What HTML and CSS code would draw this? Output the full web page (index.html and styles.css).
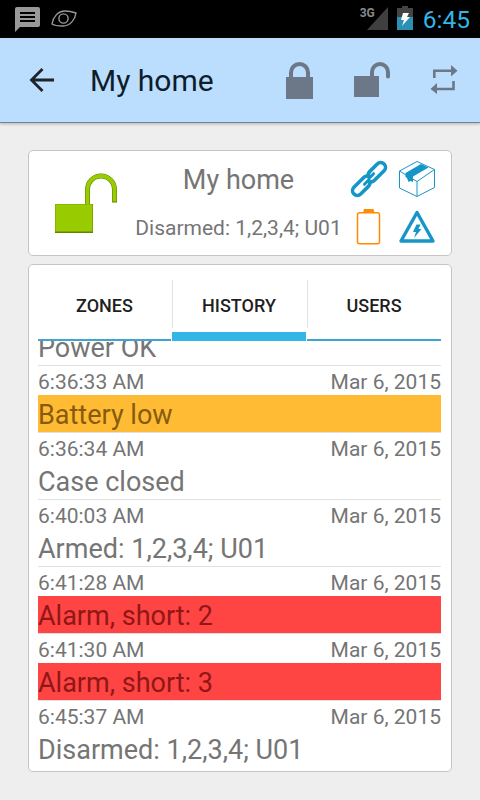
FILE: index.html
```html
<!DOCTYPE html>
<html>
    <head>
        <meta charset="utf-8">
        <title>My home</title>
        <link rel="stylesheet" href="styles.css">
    </head>
    <body>
        <div class="statusbar">
            <svg class="sms" width="26" height="26" viewBox="0 0 26 26">
                <path fill="#999" d="M2 0h21q2 0 2 2v16q0 2-2 2H5l-5 5V2q0-2 2-2z"/>
                <path stroke="#000" stroke-width="2" d="M5 6h15M5 10h15M5 14h15"/>
            </svg>
            <svg class="eye" width="26" height="18" viewBox="0 0 26 18" fill="none" stroke="#999" stroke-width="1.4">
                <path d="M1 14C2 7 7 1 14 1c5 0 8 1 11 2-1 7-6 13-13 13-5 0-8 0-11-2z"/>
                <circle cx="12.500" cy="8.500" r="4.600"/>
            </svg>
            <span class="network">3G</span>
            <svg class="signal" width="21" height="23" viewBox="0 0 21 23">
                <path fill="#3f3f3f" d="M21 0v23H0z"/>
            </svg>
            <svg class="charge" width="16" height="24" viewBox="0 0 16 24">
                <path fill="#444" d="M5 0h6v2h5v22H0V2h5z"/>
                <path fill="#2b91b3" d="M0 11h16v13H0z"/>
                <path fill="#fff" d="M6 7h6l-2 4h3l-8 9 2-6H4z"/>
            </svg>
            <span class="clock">6:45</span>
        </div>

        <div class="actionbar">
            <svg class="back" width="26" height="26" viewBox="0 0 26 26" fill="none" stroke="#1c2329" stroke-width="2.8">
                <path d="M25 13H3M13.500 2L2.500 13l11 11"/>
            </svg>
            <h1>My home</h1>
            <svg class="lock" width="28" height="37" viewBox="0 0 28 37">
                <path fill="#6c7787" d="M0 15h27v22H0z"/>
                <path fill="none" stroke="#6c7787" stroke-width="4" d="M5 16v-5.500a8.500 8.500 0 0 1 17 0V16"/>
            </svg>
            <svg class="unlock" width="37" height="36" viewBox="0 0 37 36">
                <path fill="#6c7787" d="M0 14h25v21H0z"/>
                <path fill="none" stroke="#6c7787" stroke-width="4" stroke-linecap="round" d="M18 15v-5a8 8 0 0 1 16 0v4.500"/>
            </svg>
            <svg class="refresh" width="28" height="30" viewBox="0 0 28 30">
                <path fill="none" stroke="#6c7787" stroke-width="2.6" d="M4.300 13V5.700H22M23.500 16v8H6"/>
                <path fill="#6c7787" d="M21 0l6.500 5.700L21 11.500zM7 18l-6.500 6L7 29z"/>
            </svg>
        </div>

        <div class="card summary">
            <svg class="state" width="64" height="62" viewBox="0 0 64 62">
                <path fill="none" stroke="#5f8500" stroke-width="5" d="M32.500 32V16.500a13.500 13.500 0 0 1 27 0v13"/>
                <path fill="none" stroke="#9c0" stroke-width="3.800" d="M32.500 32V16.500a13.500 13.500 0 0 1 27 0v12"/>
                <path fill="#5f8500" d="M0 31h38v29H0z"/>
                <path fill="#9c0" d="M.3 31.300h37.200v27.200H.3z"/>
            </svg>
            <div class="info">
                <div class="name">My home</div>
                <div class="status">Disarmed: 1,2,3,4; U01</div>
            </div>
            <div class="indicators">
                <svg width="38" height="38" viewBox="0 0 38 38" fill="none" stroke="#1696c8" stroke-width="3.600" stroke-linecap="round">
                    <g transform="rotate(-45 19 19)">
                        <path d="M21 17.500c-1-2.500-3-3.300-5-3.300H2.500a4.800 4.800 0 0 0 0 9.600H13c2.500 0 4-1 5-3"/>
                        <path d="M17 20.500c1 2.500 3 3.300 5 3.300h13.500a4.800 4.800 0 0 0 0-9.600H25c-2.500 0-4 1-5 3"/>
                        <path d="M12 19.500h6M20 18.500h6" stroke-width="3"/>
                    </g>
                </svg>
                <svg width="38" height="38" viewBox="0 0 38 38" fill="none" stroke="#1696c8">
                    <path d="M19 1.500l17.500 8v18L19 36.500 1.500 28V11zM1.500 11L19 21.500l17.500-12M19 21.500v15"/>
                    <path fill="#1696c8" stroke="none" d="M7.500 13L23 4l7.500 3.500-15.500 9v5.500l-2.500-1-2 1-1.500-4-1.500-1z"/>
                </svg>
                <svg width="38" height="38" viewBox="0 0 38 38">
                    <rect x="7.500" y="4.800" width="22" height="31" rx="2" fill="none" stroke="#ff8a05" stroke-width="1.500"/>
                    <path fill="#ff8a05" d="M14 1h9.500l1 4H13z"/>
                </svg>
                <svg width="38" height="38" viewBox="0 0 38 38">
                    <path fill="none" stroke="#1696c8" stroke-width="3.400" stroke-linejoin="round" d="M19 4.500L35 33H3z"/>
                    <path fill="#1696c8" d="M18.500 16.500h4l-2 4.500h3L16 30l2-6h-3z"/>
                </svg>
            </div>
        </div>

        <div class="card details">
            <div class="tabs">
                <div class="tab">ZONES</div>
                <div class="tab active">HISTORY</div>
                <div class="tab">USERS</div>
            </div>
            <div class="history">
                <div class="event">
                    <div class="message">Power OK</div>
                </div>
                <div class="event">
                    <div class="time"><span>6:36:33 AM</span><span>Mar 6, 2015</span></div>
                    <div class="message warning">Battery low</div>
                </div>
                <div class="event">
                    <div class="time"><span>6:36:34 AM</span><span>Mar 6, 2015</span></div>
                    <div class="message">Case closed</div>
                </div>
                <div class="event">
                    <div class="time"><span>6:40:03 AM</span><span>Mar 6, 2015</span></div>
                    <div class="message">Armed: 1,2,3,4; U01</div>
                </div>
                <div class="event">
                    <div class="time"><span>6:41:28 AM</span><span>Mar 6, 2015</span></div>
                    <div class="message alarm">Alarm, short: 2</div>
                </div>
                <div class="event">
                    <div class="time"><span>6:41:30 AM</span><span>Mar 6, 2015</span></div>
                    <div class="message alarm">Alarm, short: 3</div>
                </div>
                <div class="event">
                    <div class="time"><span>6:45:37 AM</span><span>Mar 6, 2015</span></div>
                    <div class="message">Disarmed: 1,2,3,4; U01</div>
                </div>
            </div>
        </div>
    </body>
</html>
```
FILE: styles.css
```css
* {
    box-sizing: border-box;
}
body {
    margin: 0;
    height: 800px;
    overflow: hidden;
    font-family: Roboto, sans-serif;
    color: #757575;
    background: #eeeeee;
}
svg {
    display: block;
    flex: none;
}
.statusbar {
    display: flex;
    align-items: flex-start;
    height: 38px;
    padding: 7px 10px 0 15px;
    background: #000000;
}
.eye {
    margin: 3px 0 0 10px;
}
.network {
    margin: -1px 0 0 auto;
    font-size: 12px;
    font-weight: bold;
    line-height: 14px;
    color: #8a8a8a;
}
.signal {
    margin: 0 0 0 -8px;
}
.charge {
    margin: -1px 0 0 9px;
}
.clock {
    margin: 0 0 0 10px;
    font-size: 24.5px;
    line-height: 26px;
    color: #33b5e5;
}
.actionbar {
    display: flex;
    align-items: center;
    height: 85px;
    padding: 0 22px 0 29px;
    background: #bbdeff;
    border-bottom: 1px solid #6f8496;
    box-shadow: 0 1px 3px rgba(0, 0, 0, 0.25);
}
.actionbar h1 {
    margin: 0 auto 0 35px;
    font-size: 30px;
    font-weight: normal;
    color: #0e1d2a;
}
.unlock {
    margin: 0 0 0 40px;
}
.refresh {
    margin: 0 0 0 39px;
}
.card {
    margin: 0 28px;
    background: #ffffff;
    border: 1px solid #c4c4c4;
    border-radius: 5px;
}
.summary {
    display: flex;
    height: 106px;
    margin-top: 27px;
    padding: 0 15px 0 26px;
}
.state {
    margin: 22px 0 0 0;
}
.info {
    flex: 1;
    padding-left: 8px;
    white-space: nowrap;
    text-align: center;
}
.name {
    margin-top: 12px;
    font-size: 27px;
    line-height: 34px;
}
.status {
    margin-top: 17px;
    font-size: 21px;
    line-height: 28px;
}
.indicators {
    display: grid;
    grid-template-columns: 38px 38px;
    gap: 10px;
    align-content: start;
    padding-top: 9px;
}
.details {
    height: 508px;
    margin-top: 8px;
    padding: 15px 10px 4px 9px;
}
.tabs {
    display: grid;
    grid-template-columns: 133px 134px 134px;
    column-gap: 1px;
    height: 61px;
}
.tab {
    border-bottom: 2px solid #3fa5d0;
    font-size: 18px;
    font-weight: 500;
    line-height: 52px;
    text-align: center;
    color: #1f1f1f;
    background: linear-gradient(#e2e2e2, #e2e2e2) no-repeat left top / 1px 48px;
}
.tab:first-child {
    background: none;
}
.tab.active {
    border-bottom: 9px solid #33b5e5;
}
.history {
    display: flex;
    flex-direction: column;
    justify-content: flex-end;
    height: 426px;
    overflow: hidden;
}
.event {
    flex: none;
    border-bottom: 1px solid #e0e0e0;
}
.event:last-child {
    border-bottom: 0;
}
.time {
    display: flex;
    justify-content: space-between;
    height: 29px;
    font-size: 21px;
    line-height: 33px;
}
.message {
    height: 37px;
    font-size: 27px;
    line-height: 41px;
}
.warning {
    color: #875b0f;
    background: #ffbb33;
}
.alarm {
    color: #8f1717;
    background: #ff4444;
}
```
